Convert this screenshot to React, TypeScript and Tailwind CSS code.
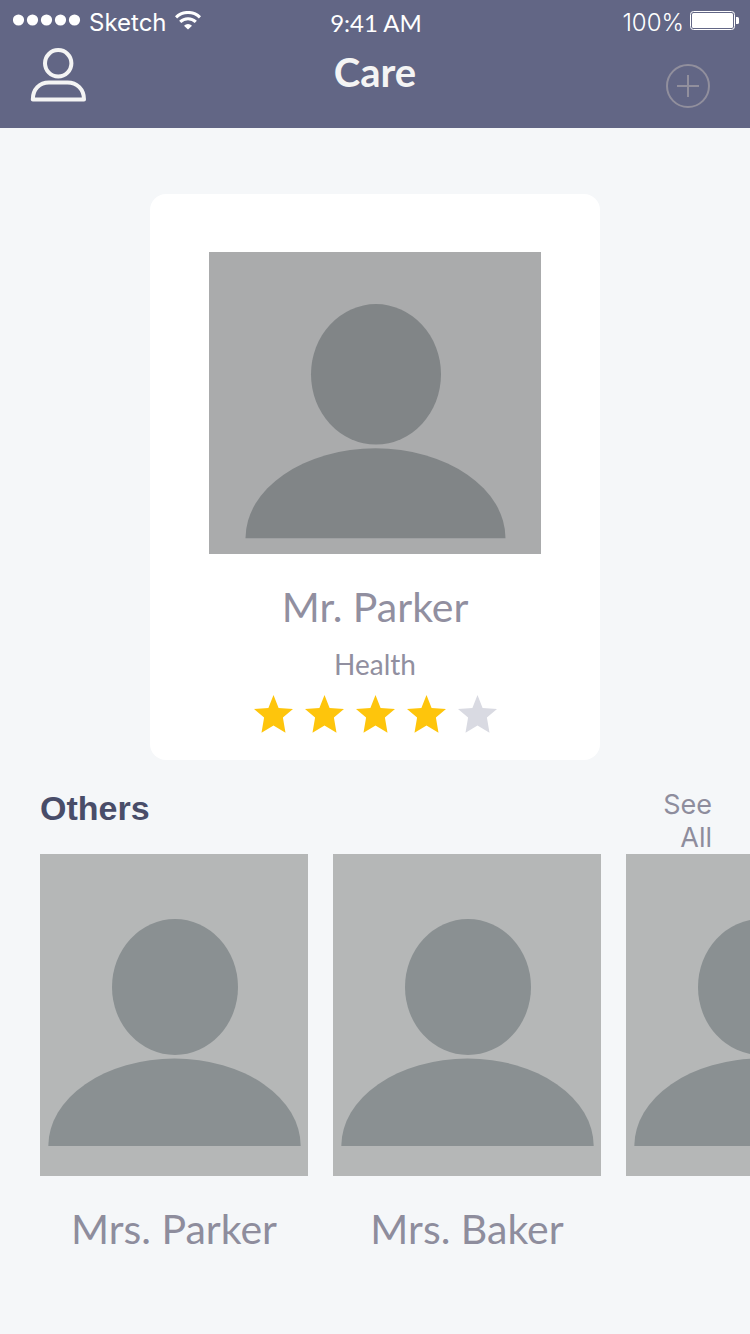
import React from "react";

const LATO = "font-['Lato','Noto_Sans',sans-serif]";
const INTER = "font-['Inter','Roboto',sans-serif]";

function StatusBar() {
  return (
    <div className="grid h-10 grid-cols-3 items-center pt-[5px] pr-[11px] pl-[13px] text-2xl leading-8 text-white">
      <div className="flex items-center">
        <svg className="mb-[5px] shrink-0" width="68" height="12" viewBox="0 0 68 12" fill="currentColor" aria-hidden="true">
          <circle cx="5.5" cy="6" r="5.6" />
          <circle cx="19.5" cy="6" r="5.6" />
          <circle cx="33.5" cy="6" r="5.6" />
          <circle cx="47.5" cy="6" r="5.6" />
          <circle cx="61.5" cy="6" r="5.6" />
        </svg>
        <span className={`ml-2 ${INTER}`}>Sketch</span>
        <svg className="mb-[5px] ml-2 shrink-0" width="26" height="19" viewBox="0 0 26 19" fill="none" stroke="currentColor" aria-hidden="true">
          <path d="M1 6.4a17.200 17.200 0 0 1 24 0" strokeWidth="3.200" />
          <path d="M5.200 10.900a11 11 0 0 1 15.600 0" strokeWidth="3" />
          <path d="M13 18.600 9 14.700a5.700 5.700 0 0 1 8 0Z" fill="currentColor" stroke="none" />
        </svg>
      </div>
      <span className={`text-center ${LATO}`}>9:41 AM</span>
      <div className="flex items-center justify-end">
        <span className={`font-light ${INTER}`}>100%</span>
        <svg className="mb-[5px] ml-[6px] shrink-0" width="49" height="19" viewBox="0 0 49 19" aria-hidden="true">
          <rect x="0.5" y="0.5" width="44" height="18" rx="3" fill="none" stroke="currentColor" />
          <rect x="2" y="2" width="41" height="15" rx="1.5" fill="currentColor" />
          <path d="M46 6h1.5a1.500 1.500 0 0 1 1.500 1.500v4a1.500 1.500 0 0 1-1.500 1.500H46Z" fill="currentColor" />
        </svg>
      </div>
    </div>
  );
}

function NavBar() {
  return (
    <nav className="grid h-[88px] grid-cols-[1fr_auto_1fr] items-start px-[30px] text-[#f4f4f4]">
      <button type="button" aria-label="Profile" className="mt-2 justify-self-start">
        <svg className="block" width="57" height="54" viewBox="0 0 57 54" fill="none" stroke="currentColor" strokeWidth="4">
          <circle cx="28.200" cy="15.300" r="13.200" />
          <path d="M2.800 51.500C2.800 41.500 9.500 34.400 19 34.400h18.500c9.500 0 16.500 7.100 16.500 17.100Z" strokeLinejoin="round" />
        </svg>
      </button>
      <h1 className={`mt-2 text-[40px] leading-12 font-bold ${LATO}`}>Care</h1>
      <button type="button" aria-label="Add" className="mt-6 mr-[10px] justify-self-end text-[#918f9d]">
        <svg className="block" width="44" height="44" viewBox="0 0 44 44" fill="none" stroke="currentColor" strokeWidth="2">
          <circle cx="22" cy="22" r="21" />
          <path d="M22 11v22M11 22h22" />
        </svg>
      </button>
    </nav>
  );
}

function Star({ filled }: { filled: boolean }) {
  return (
    <svg className={filled ? "text-[#fec50c]" : "text-[#d9dae2]"} width="39" height="38" viewBox="0 0 39 38" fill="currentColor" aria-hidden="true">
      <path d="M19.500 0 24.600 13 39 13.900 28.900 22.600 31.500 37.700 19.500 30.400 7.500 37.700 10.100 22.600 0 13.900 14.400 13Z" />
    </svg>
  );
}

function FeaturedCard() {
  return (
    <article className="mx-auto flex w-3/5 flex-col items-center rounded-2xl bg-white pt-[58px] pb-[27px]">
      <svg className="h-auto w-[332px] max-w-full" viewBox="0 0 332 302" role="img" aria-label="Mr. Parker">
        <rect width="332" height="302" fill="#aaabac" />
        <g fill="#818587">
          <ellipse cx="167" cy="122.300" rx="65" ry="70.200" />
          <path d="M36.500 286.300a130 90 0 0 1 260 0Z" />
        </g>
      </svg>
      <h2 className={`mt-7 text-[41px] leading-[50px] text-[#918fa0] ${LATO}`}>Mr. Parker</h2>
      <p className={`mt-[15px] text-[28px] leading-[34px] text-[#918fa0] ${LATO}`}>Health</p>
      <div className="mt-[14px] flex gap-3" role="img" aria-label="4 out of 5 stars">
        {[1, 2, 3, 4, 5].map((n) => (
          <Star key={n} filled={n <= 4} />
        ))}
      </div>
    </article>
  );
}

function PersonTile({ name }: { name?: string }) {
  return (
    <li className="flex w-[268px] shrink-0 flex-col items-center">
      <svg className="block" width="268" height="322" viewBox="0 0 268 322" aria-hidden="true">
        <rect width="268" height="322" fill="#b5b7b7" />
        <g fill="#8a9092">
          <ellipse cx="135" cy="133" rx="63" ry="68" />
          <path d="M8.300 292a126.200 87.500 0 0 1 252.400 0Z" />
        </g>
      </svg>
      {name && <span className={`mt-7 text-[41px] leading-[50px] text-[#8e8d9d] ${LATO}`}>{name}</span>}
    </li>
  );
}

const others: { id: number; name?: string }[] = [
  { id: 1, name: "Mrs. Parker" },
  { id: 2, name: "Mrs. Baker" },
  { id: 3 },
];

export default function App() {
  return (
    <div className="min-h-screen overflow-x-hidden bg-[#f5f7f9]">
      <header className="bg-[#626685]">
        <StatusBar />
        <NavBar />
      </header>
      <main className="pt-[66px]">
        <FeaturedCard />
        <section className="mt-7">
          <div className="flex items-start justify-between pr-[38px] pl-10">
            <h2 className="text-[34px] leading-10 font-bold text-[#494d69] font-['Liberation_Sans',sans-serif]">Others</h2>
            <a href="#all" className={`w-16 text-right text-[27px] leading-[33px] text-[#8e8d9d] ${INTER}`}>
              See All
            </a>
          </div>
          <ul className="flex gap-[25px] overflow-hidden pl-10">
            {others.map((person) => (
              <PersonTile key={person.id} name={person.name} />
            ))}
          </ul>
        </section>
      </main>
    </div>
  );
}
